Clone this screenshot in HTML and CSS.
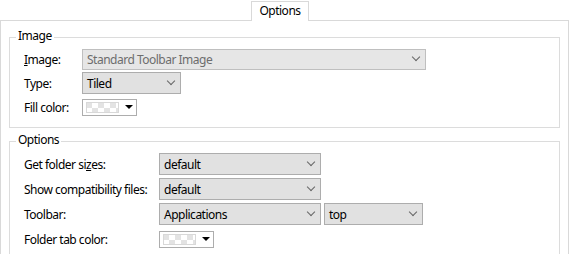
FILE: index.html
```html
<!DOCTYPE html>
<html>
<head>
<meta charset="utf-8">
<link rel="stylesheet" href="styles.css">
</head>
<body>
<div class="tabstrip">
  <div class="tab">Options</div>
</div>
<div class="panel">
  <div class="group group-image">
    <div class="legend">Image</div>
    <div class="row">
      <label class="lbl lbl-narrow"><u>I</u>mage:</label>
      <div class="combo combo-disabled w-image"><span>Standard Toolbar Image</span><span class="chev"></span></div>
    </div>
    <div class="row">
      <label class="lbl lbl-narrow">Type:</label>
      <div class="combo w-short"><span>Tiled</span><span class="chev"></span></div>
    </div>
    <div class="row">
      <label class="lbl lbl-narrow">Fill color:</label>
      <div class="colorbtn"><span class="swatch"></span><span class="tri"></span></div>
    </div>
  </div>
  <div class="group group-options">
    <div class="legend">Options</div>
    <div class="row">
      <label class="lbl lbl-wide">Get folder si<u>z</u>es:</label>
      <div class="combo w-mid"><span>default</span><span class="chev"></span></div>
    </div>
    <div class="row">
      <label class="lbl lbl-wide">Show compatibility files:</label>
      <div class="combo w-mid"><span>default</span><span class="chev"></span></div>
    </div>
    <div class="row">
      <label class="lbl lbl-wide">Toolbar:</label>
      <div class="combo w-mid"><span>Applications</span><span class="chev"></span></div>
      <div class="combo w-short"><span>top</span><span class="chev"></span></div>
    </div>
    <div class="row">
      <label class="lbl lbl-wide">Folder tab color:</label>
      <div class="colorbtn"><span class="swatch"></span><span class="tri"></span></div>
    </div>
  </div>
</div>
</body>
</html>
```

FILE: styles.css
```css
html, body {
  margin: 0;
  padding: 0;
  background: #fff;
  height: 100%;
  overflow: hidden;
}
body {
  font-family: "Noto Sans", "Open Sans", sans-serif;
  font-size: 12px;
  letter-spacing: -0.5px;
  color: #000;
  white-space: nowrap;
}
.tabstrip {
  height: 20px;
  padding-top: 1px;
  box-sizing: border-box;
  display: flex;
  position: relative;
  z-index: 1;
}
.tab {
  margin-left: 251px;
  width: 58px;
  height: 20px;
  box-sizing: border-box;
  border: 1px solid #d9d9d9;
  border-bottom: none;
  background: #fff;
  display: flex;
  align-items: center;
  justify-content: center;
  line-height: 16px;
  padding-bottom: 1px;
}
.panel {
  border: 1px solid #d9d9d9;
  border-bottom: none;
  padding: 0 8px;
  height: 234px;
  overflow: hidden;
  box-sizing: border-box;
  width: 569px;
}
.group {
  position: relative;
  border: 1px solid #dcdcdc;
  display: flex;
  flex-direction: column;
  gap: 2px;
  padding-left: 14px;
}
.group-image {
  margin-top: 16px;
  padding-top: 10px;
  padding-bottom: 9px;
}
.group-options {
  margin-top: 13px;
  padding-top: 11px;
  gap: 3px;
  padding-bottom: 20px;
}
.legend {
  position: absolute;
  top: -10px;
  left: 6px;
  padding: 0 2px;
  background: #fff;
  line-height: 16px;
}
.row {
  display: flex;
  align-items: center;
  height: 22px;
}
.lbl {
  flex: none;
}
.lbl-narrow { width: 58px; }
.lbl-wide { width: 135px; }
.combo {
  height: 22px;
  box-sizing: border-box;
  border: 1px solid #adadad;
  background: #e1e1e1;
  display: flex;
  align-items: center;
  justify-content: space-between;
  padding: 0 5px 0 4px;
  margin-right: 3px;
}
.combo-disabled {
  border-color: #bfbfbf;
  background: #e6e6e6;
  color: #6d6d6d;
}
.w-image { width: 344px; height: 21px; }
.w-short { width: 99px; }
.w-mid { width: 162px; }
.chev {
  width: 5px;
  height: 5px;
  border-right: 1px solid #666;
  border-bottom: 1px solid #666;
  transform: rotate(45deg);
  margin-top: -4px;
  margin-right: 1px;
}
.colorbtn {
  width: 55px;
  height: 17px;
  box-sizing: border-box;
  border: 1px solid #adadad;
  background: #fff;
  display: flex;
  align-items: center;
  padding-left: 3px;
  gap: 6px;
}
.swatch {
  width: 33px;
  height: 11px;
  box-sizing: border-box;
  border: 1px solid #d8d8d8;
  background-color: #fff;
  background-image: conic-gradient(#e3e3e3 25%, #fff 0 50%, #e3e3e3 0 75%, #fff 0);
  background-size: 12px 10px;
  background-position: 5px 0;
}
.tri {
  width: 0;
  height: 0;
  border-left: 4px solid transparent;
  border-right: 4px solid transparent;
  border-top: 4px solid #000;
}
```
